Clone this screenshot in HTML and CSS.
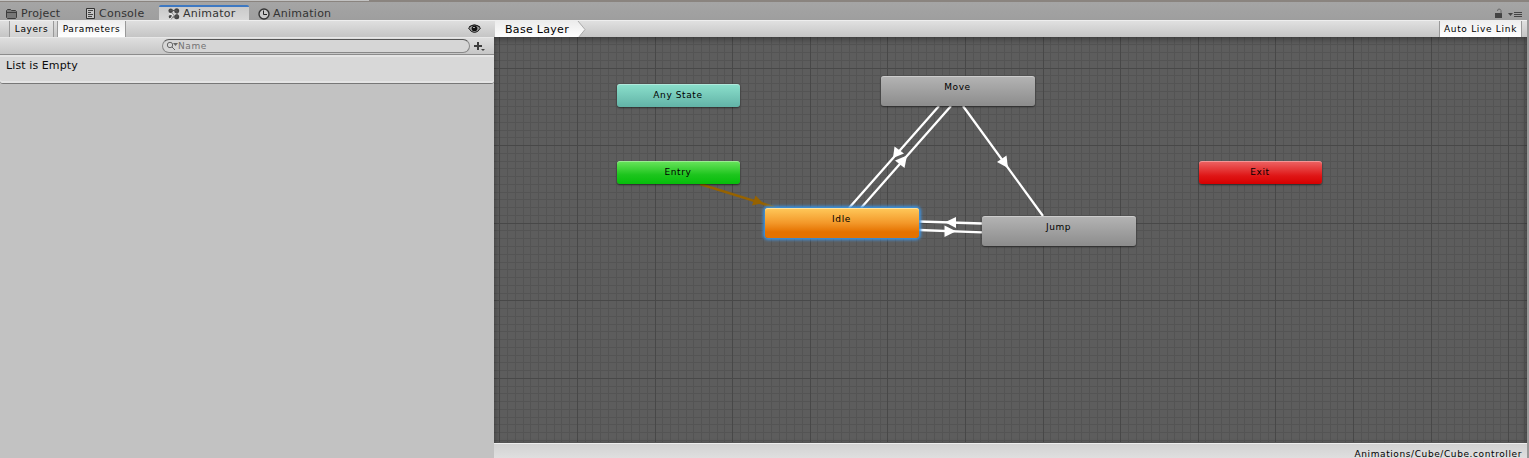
FILE: index.html
```html
<!DOCTYPE html>
<html lang="en">
<head>
<meta charset="utf-8">
<title>Animator</title>
<link rel="stylesheet" href="styles.css">
</head>
<body>
<div class="window">
  <div class="dock-edge"><span class="dock-left"></span><span class="dock-right"></span></div>
  <header class="tabs">
    <div class="tab tab-project"><svg class="icon" width="12" height="12" viewBox="0 0 12 12"><path d="M.5 9.5v-7l1-1h3l1 1h4l1 1v6l-1 1h-8z" fill="#777" stroke="#3c3c3c"/><path d="M1 4.5h9" stroke="#3c3c3c"/></svg><span>Project</span></div>
    <div class="tab tab-console"><svg class="icon" width="10" height="12" viewBox="0 0 10 12"><path d="M.5.5h8v10h-8z" fill="#c4c4c4" stroke="#333"/><path d="M2 2.5h5M2 4.5h3M2 6.5h5M2 8.5h4" stroke="#444"/></svg><span>Console</span></div>
    <div class="tab tab-animator"><svg class="icon" width="12" height="12" viewBox="0 0 12 12"><g fill="#444"><circle cx="2.7" cy="2.8" r="2.3"/><circle cx="8.7" cy="2.8" r="2.5"/><circle cx="8.7" cy="8.7" r="2.5"/><circle cx="2.5" cy="8.8" r="1.8"/></g><path d="M2 2.5h7M9 3v6M5 9h4" stroke="#555" fill="none"/><path d="M1 5.500l4 1.500-3 4.500" stroke="#eee" fill="none"/><path d="M4 5l2 2.500-3 4" stroke="#888" fill="none"/></svg><span>Animator</span></div>
    <div class="tab tab-animation"><svg class="icon" width="12" height="12" viewBox="0 0 12 12"><circle cx="6" cy="6" r="5" fill="#c8c8c8" stroke="#333" stroke-width="1.4"/><path d="M5.500 2.500V6.500H9" stroke="#222" fill="none"/></svg><span>Animation</span></div>
    <div class="tab-tools">
      <svg width="30" height="12" viewBox="0 0 30 12"><path d="M0 5h7v5H0z" fill="#444"/><path d="M2.5 3q0-2 1.500-2t2 1.500v3" fill="none" stroke="#666"/><path d="M13 5h5l-2.5 3z" fill="#444"/><path d="M19 4.5h8M19 6.5h8M19 8.500h8" stroke="#444"/></svg>
    </div>
  </header>
  <main class="panes">
    <section class="sidebar">
      <div class="toolbar">
        <button class="mode mode-layers">Layers</button><button class="mode mode-params">Parameters</button>
        <svg class="eye" width="13" height="10" viewBox="0 0 13 10"><path d="M.5 4Q3 1 6.500 1T12.500 4Q10 8.500 6.500 8.500T.5 4z" fill="#999" stroke="#222"/><circle cx="6.500" cy="4.500" r="2.800" fill="#111"/><path d="M1 3Q6-1 12 3" fill="none" stroke="#222"/><path d="M5 3.500h2" stroke="#aaa"/></svg>
      </div>
      <div class="search-row">
        <div class="search"><svg width="12" height="10" viewBox="0 0 12 10"><circle cx="4" cy="4" r="2.700" fill="none" stroke="#666"/><path d="M6 6l3 3" stroke="#666"/><path d="M7 2h5l-2.500 3z" fill="#666"/></svg><span>Name</span></div>
        <svg class="plus" width="12" height="12" viewBox="0 0 12 12"><path d="M4 1v8M0 5h8" stroke="#3c3c3c" stroke-width="2"/><path d="M7 8h4L9 10z" fill="#444"/></svg>
      </div>
      <div class="list"><span>List is Empty</span></div>
    </section>
    <section class="editor">
      <div class="crumbs"><div class="crumb"><svg width="92" height="17" viewBox="0 0 92 17"><defs><linearGradient id="cg" x2="0" y2="1"><stop stop-color="#ececec"/><stop offset="1" stop-color="#fff"/></linearGradient></defs><path d="M1 0H84L91 8.500 84 17H1z" fill="url(#cg)"/><path d="M84 0l7 8.500L84 17" fill="none" stroke="#aaa"/></svg><span>Base Layer</span></div><button class="live">Auto Live Link</button></div>
      <div class="graph">
        <svg class="canvas" width="1033" height="406" viewBox="494 37 1033 406">
          <path id="minor" class="minor"/><path id="major" class="major"/>
          <g class="wires"><path d="M939 106L849 208M951 106L861 208M963 106L1043 216M919 221.500L982 223.500M919 230L982 232.300"/></g>
          <g fill="#fff"><path d="M893 158L894.500 146.500 904 153.500z"/><path d="M907 155.500L904.500 168 895 160.500z"/><path d="M1008 168L997 162 1006.500 155.500z"/><path d="M945 222.200L956 217V228z"/><path d="M956 231.300L944.500 225.500V237z"/></g>
          <path d="M700 184L775 207.500" stroke="#966200" stroke-width="2.500"/><path d="M763 203L752 205.500 755.500 195.500z" fill="#966200"/>
        </svg>
        <div class="node any"><span>Any State</span></div>
        <div class="node entry"><span>Entry</span></div>
        <div class="node exit"><span>Exit</span></div>
        <div class="node state move"><span>Move</span></div>
        <div class="node state jump"><span>Jump</span></div>
        <div class="node state idle"><span>Idle</span></div>
      </div>
      <footer class="status"><span>Animations/Cube/Cube.controller</span></footer>
    </section>
  </main>
</div>
<script src="grid.js"></script>
</body>
</html>
```
FILE: grid.js
```js
const step = 7.76;
let minor = "", major = "";
for (let i = 0; i < 133; i++) {
  const d = `M${Math.round(499.3 + i * step) + 0.5} 37V442`;
  if (i % 10 === 0) major += d; else minor += d;
}
for (let i = -3; i < 49; i++) {
  const d = `M494 ${Math.floor(68 + i * step) + 0.5}H1527`;
  if (i % 10 === 0) major += d; else minor += d;
}
document.getElementById("minor").setAttribute("d", minor);
document.getElementById("major").setAttribute("d", major);
```
FILE: styles.css
```css
* { box-sizing: border-box; }
body { margin: 0; font: 11px/14px "DejaVu Sans", sans-serif; letter-spacing: .1px; color: #0b0b0b; background: #a2a2a2; white-space: nowrap; }
svg { display: block; flex: none; }
button { font: inherit; letter-spacing: inherit; color: inherit; padding: 0; }
.window { width: 1529px; height: 458px; display: flex; flex-direction: column; overflow: hidden; }
.dock-edge { height: 2px; display: flex; gap: 2px; background: #8a847f; }
.dock-left { width: 369px; height: 1px; background: #c2c2c2; }
.dock-right { flex: 1; background: #8a847f; }
.tabs { height: 18px; display: flex; background: linear-gradient(#a5a5a5, #9e9e9e); color: #333; letter-spacing: .25px; }
.tab { height: 18px; padding-top: 6px; display: flex; align-items: center; gap: 3px; }
.tab-project { width: 80px; padding-left: 6px; }
.tab-console { width: 79px; padding-left: 6px; }
.tab-animator { width: 90px; height: 15px; margin-top: 3px; padding: 1px 0 0 9px; background: linear-gradient(#cacaca, #d8d8d8); border-top: 2px solid #3d78c2; border-radius: 2px 2px 0 0; }
.tab-animation { padding-left: 9px; }
.tab-tools { margin-left: auto; padding: 6px 4px 0 0; }
.panes { flex: 1; display: flex; min-height: 0; }
.sidebar { width: 494px; display: flex; flex-direction: column; background: #c2c2c2; }
.toolbar { height: 17px; display: flex; padding-left: 9px; border-top: 1px solid #eee; background: linear-gradient(#dfdfdf, #c5c5c5); }
.toolbar, .live, .node, .status, .search { font-size: 9px; letter-spacing: .6px; color: #000; }
.mode { height: 16px; border: 0 solid #999; border-width: 0 1px; background: linear-gradient(#e5e5e5, #d2d2d2); line-height: 17px; }
.mode-layers { width: 45px; }
.mode-params { width: 69px; margin-left: 3px; background: linear-gradient(#eee, #fff); }
.eye { margin: 3px 13px 0 auto; }
.search-row { height: 18px; display: flex; background: linear-gradient(#dedede, #c6c6c6); border-top: 1px solid #e8e8e8; border-bottom: 1px solid #8c8c8c; }
.search { width: 308px; height: 14px; margin: 1px 0 0 162px; padding-left: 3px; display: flex; align-items: center; border: 1px solid #888; border-top: 1px solid #555; border-radius: 7px; background: #d6d6d6; color: #737373; }
.search span { line-height: 13px; }
.plus { margin: 3px 0 0 4px; }
.list { height: 29px; padding: 2px 6px; background: #d8d8d8; border-top: 2px solid #e5e5e5; border-bottom: 1px solid #777; box-shadow: inset 0 -2px #e4e4e4; border-radius: 0 0 3px 3px; }
.editor { width: 1035px; display: flex; flex-direction: column; border-right: 2px solid #999; background: #5d5d5d; }
.crumbs { height: 17px; flex: none; display: flex; overflow: hidden; justify-content: space-between; border-top: 1px solid #eee; background: linear-gradient(#e0e0e0, #c5c5c5); color: #000; }
.crumb { display: grid; }
.crumb > * { grid-area: 1 / 1; }
.crumb span { padding-left: 11px; line-height: 17px; letter-spacing: .3px; }
.live { width: 83px; margin-right: 5px; border: 0 solid #999; border-width: 0 1px; background: linear-gradient(#eee, #fff); line-height: 17px; letter-spacing: .7px; }
.graph { height: 406px; flex: none; position: relative; overflow: hidden; background: #5d5d5d; }
.graph::after { content: ""; position: absolute; inset: 0; box-shadow: inset 0 2px 6px #0006; pointer-events: none; }
.canvas { position: absolute; left: 0; top: 0; }
.minor { stroke: #545454; fill: none; }
.major { stroke: #484848; fill: none; }
.wires { stroke: #fff; stroke-width: 2.3; fill: none; }
.node { position: absolute; width: 123px; height: 23px; padding-right: 1px; border-radius: 3px; text-align: center; line-height: 22px; box-shadow: 0 1px 2px #0008, inset 0 1px #fff5; }
.state { width: 154px; height: 30px; background: linear-gradient(#b4b4b4, #8c8c8c); }
.any { left: 123px; top: 47px; background: linear-gradient(#8be0cc, #62b3a7); }
.entry { left: 123px; top: 124px; background: linear-gradient(#6ae45d, #1dc51d 60%, #06bd0b); }
.exit { left: 705px; top: 124px; background: linear-gradient(#ed6565, #df1515 65%, #d60000); }
.move { left: 387px; top: 39px; }
.jump { left: 488px; top: 179px; }
.idle { left: 271px; top: 171px; background: linear-gradient(#ffc95b, #f39829 50%, #e57200 80%); box-shadow: 0 0 3px 2px #3c92e0, inset 0 1px #ffe3a0; }
.status { height: 15px; flex: none; display: flex; justify-content: flex-end; padding: 3px 5px 0 0; border-top: 1px solid #eee; background: linear-gradient(#d2d2d2, #dfdfdf); }
```
